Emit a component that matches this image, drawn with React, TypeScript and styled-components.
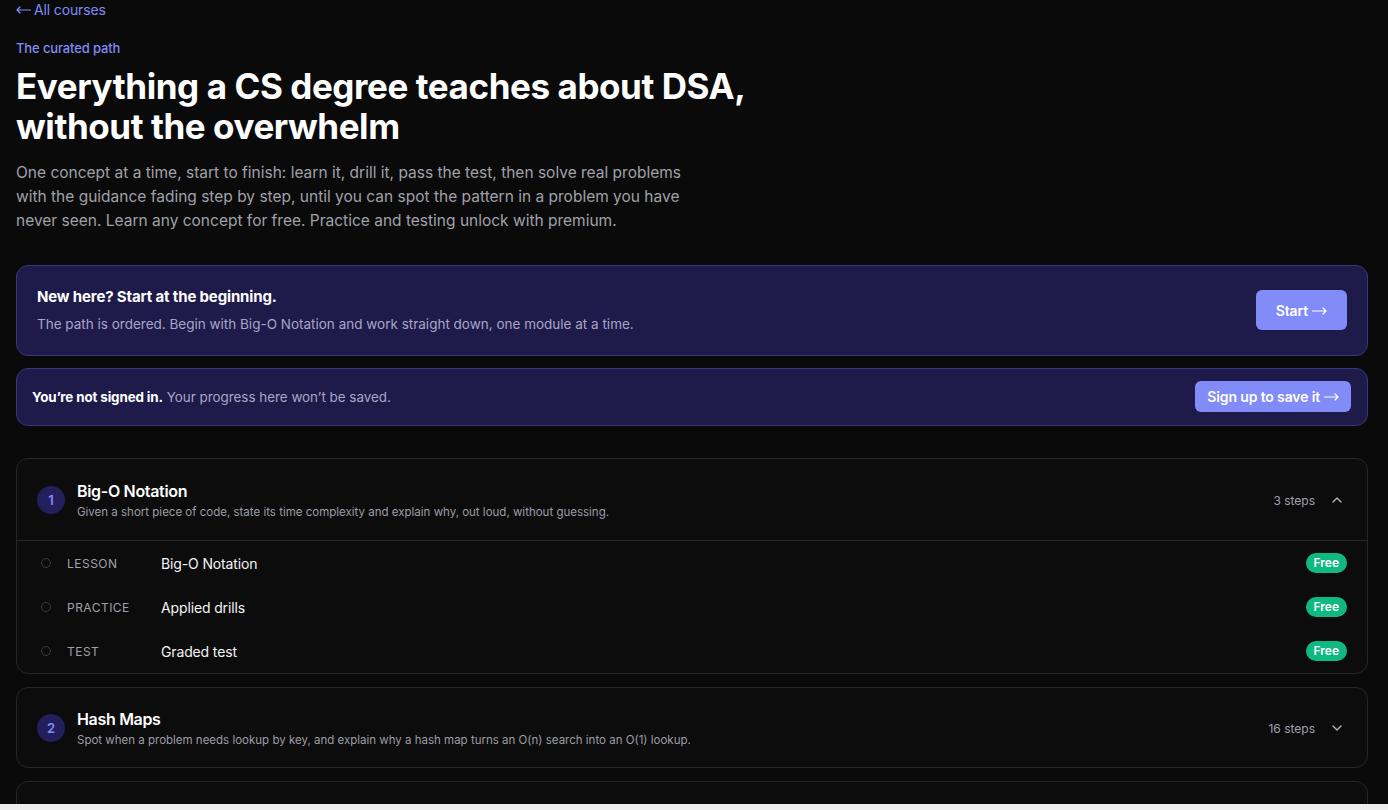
import React from "react";
import styled, { createGlobalStyle } from "styled-components";
import { ChevronDown, ChevronUp } from "lucide-react";

const GlobalStyle = createGlobalStyle`
  html, body {
    margin: 0;
    padding: 0;
    background: #0a0a0a;
    color: #fafafa;
    font-family: Inter, "Noto Sans", sans-serif;
    -webkit-font-smoothing: antialiased;
  }
  * {
    box-sizing: border-box;
  }
`;

const Page = styled.main`
  padding: 0 20px 40px 16px;
  min-height: 100vh;
`;

const ArrowSvg = styled.svg<{ flip?: boolean }>`
  width: 15px;
  height: 8px;
  vertical-align: middle;
  transform: ${(p) => (p.flip ? "scaleX(-1)" : "none")};
`;

// thin, long arrow used in links and buttons
const Arrow = ({ back }: { back?: boolean }) => (
  <ArrowSvg flip={back} viewBox="0 0 15 8" fill="none">
    <path
      d="M0.5 4H14M11 1L14 4L11 7"
      stroke="currentColor"
      strokeWidth="1.2"
      strokeLinecap="round"
      strokeLinejoin="round"
    />
  </ArrowSvg>
);

const BackLink = styled.a`
  display: flex;
  align-items: center;
  gap: 3px;
  font-size: 14px;
  line-height: 20px;
  color: #818cf8;
  text-decoration: none;
  letter-spacing: -0.01em;
`;

const Eyebrow = styled.div`
  margin-top: 18px;
  font-size: 13px;
  line-height: 20px;
  font-weight: 500;
  color: #818cf8;
  letter-spacing: -0.01em;
`;

const Heading = styled.h1`
  margin: 8px 0 0;
  max-width: 768px;
  font-size: 35px;
  line-height: 40px;
  font-weight: 700;
  letter-spacing: -0.012em;
  color: #ffffff;
`;

const Lead = styled.p`
  margin: 15px 0 0;
  max-width: 680px;
  font-size: 15.5px;
  line-height: 24px;
  color: #a1a1aa;
`;

const Banner = styled.section<{ compact?: boolean }>`
  display: flex;
  align-items: center;
  justify-content: space-between;
  gap: 24px;
  background: #1e1b4b;
  border: 1px solid #3a367a;
  border-radius: 12px;
  padding: ${(p) => (p.compact ? "12px 16px 13px 15px" : "20px 20px 21px")};
  margin-top: ${(p) => (p.compact ? "12px" : "32px")};
`;

const BannerTitle = styled.div`
  font-size: 15px;
  line-height: 22px;
  font-weight: 700;
  letter-spacing: -0.01em;
  color: #ffffff;
`;

const BannerText = styled.div`
  margin-top: 6px;
  font-size: 13.5px;
  line-height: 20px;
  color: #a8a6c4;
`;

const Notice = styled.div`
  font-size: 13.4px;
  line-height: 20px;
  color: #a8a6c4;

  strong {
    color: #ffffff;
    font-weight: 700;
    letter-spacing: -0.01em;
  }
`;

const CtaButton = styled.button<{ size?: "lg" | "sm" }>`
  flex-shrink: 0;
  display: inline-flex;
  align-items: center;
  gap: 4px;
  border: none;
  border-radius: 6px;
  background: #818cf8;
  color: #ffffff;
  font-family: inherit;
  font-size: 14px;
  font-weight: 600;
  letter-spacing: -0.01em;
  cursor: pointer;
  height: ${(p) => (p.size === "sm" ? "31px" : "40px")};
  padding: ${(p) => (p.size === "sm" ? "0 12px" : "0 20px")};

  svg {
    margin-top: 1px;
  }
`;

const Modules = styled.div`
  margin-top: 32px;
  display: flex;
  flex-direction: column;
  gap: 13px;
`;

const ModuleCard = styled.section`
  border: 1px solid #26262a;
  border-radius: 12px;
  background: #0c0c0d;
  overflow: hidden;
`;

const ModuleHeader = styled.div<{ open?: boolean }>`
  display: flex;
  align-items: center;
  gap: 12px;
  padding: ${(p) => (p.open ? "20px 20px 19px" : "19px 20px 18px")};
  border-bottom: ${(p) => (p.open ? "1px solid #26262a" : "none")};
`;

const NumberBadge = styled.div`
  width: 28px;
  height: 28px;
  flex-shrink: 0;
  border-radius: 50%;
  background: #231f5c;
  color: #818cf8;
  display: grid;
  place-items: center;
  font-size: 13px;
  font-weight: 600;
`;

const ModuleInfo = styled.div`
  flex: 1;
  min-width: 0;
`;

const ModuleTitle = styled.div`
  font-size: 16px;
  line-height: 24px;
  font-weight: 600;
  letter-spacing: -0.02em;
  color: #ffffff;
`;

const ModuleDesc = styled.div`
  font-size: 11.5px;
  line-height: 18px;
  color: #9d9da6;
`;

const StepCount = styled.div`
  display: flex;
  align-items: center;
  gap: 14px;
  font-size: 12px;
  color: #a1a1aa;
  padding-right: 2px;
`;

const StepList = styled.ul`
  list-style: none;
  margin: 0;
  padding: 0;
`;

const StepRow = styled.li`
  display: grid;
  grid-template-columns: 10px 78px 1fr auto;
  align-items: center;
  column-gap: 16px;
  height: 44px;
  padding: 0 20px 0 24px;
`;

const StepDot = styled.span`
  width: 10px;
  height: 10px;
  border-radius: 50%;
  border: 1.5px solid #3a3a40;
`;

const StepKind = styled.span`
  font-size: 12px;
  letter-spacing: 0.04em;
  text-transform: uppercase;
  color: #a1a1aa;
`;

const StepTitle = styled.span`
  font-size: 14px;
  color: #f4f4f5;
  letter-spacing: -0.01em;
`;

const FreeTag = styled.span`
  background: #10b981;
  color: #ffffff;
  font-size: 12px;
  font-weight: 600;
  line-height: 20px;
  padding: 0 8px;
  border-radius: 999px;
`;

const BottomEdge = styled.div`
  position: fixed;
  left: 0;
  right: 0;
  bottom: 0;
  height: 6px;
  background: #efefef;
`;

type Step = { kind: string; title: string };

type Module = {
  title: string;
  desc: string;
  steps: number;
  open?: boolean;
  items?: Step[];
};

const modules: Module[] = [
  {
    title: "Big-O Notation",
    desc: "Given a short piece of code, state its time complexity and explain why, out loud, without guessing.",
    steps: 3,
    open: true,
    items: [
      { kind: "Lesson", title: "Big-O Notation" },
      { kind: "Practice", title: "Applied drills" },
      { kind: "Test", title: "Graded test" },
    ],
  },
  {
    title: "Hash Maps",
    desc: "Spot when a problem needs lookup by key, and explain why a hash map turns an O(n) search into an O(1) lookup.",
    steps: 16,
  },
  {
    title: "Two Pointers",
    desc: "Recognise sorted-input problems where two indices moving toward each other replace a nested loop.",
    steps: 12,
  },
];

export default function App() {
  return (
    <>
      <GlobalStyle />
      <Page>
        <BackLink href="#">
          <Arrow back />
          All courses
        </BackLink>
        <Eyebrow>The curated path</Eyebrow>
        <Heading>
          Everything a CS degree teaches about DSA, without the overwhelm
        </Heading>
        <Lead>
          One concept at a time, start to finish: learn it, drill it, pass the
          test, then solve real problems with the guidance fading step by step,
          until you can spot the pattern in a problem you have never seen. Learn
          any concept for free. Practice and testing unlock with premium.
        </Lead>

        <Banner>
          <div>
            <BannerTitle>New here? Start at the beginning.</BannerTitle>
            <BannerText>
              The path is ordered. Begin with Big-O Notation and work straight
              down, one module at a time.
            </BannerText>
          </div>
          <CtaButton>
            Start
            <Arrow />
          </CtaButton>
        </Banner>

        <Banner compact>
          <Notice>
            <strong>You’re not signed in.</strong> Your progress here won’t be
            saved.
          </Notice>
          <CtaButton size="sm">
            Sign up to save it
            <Arrow />
          </CtaButton>
        </Banner>

        <Modules>
          {modules.map((m, i) => (
            <ModuleCard key={m.title}>
              <ModuleHeader open={m.open}>
                <NumberBadge>{i + 1}</NumberBadge>
                <ModuleInfo>
                  <ModuleTitle>{m.title}</ModuleTitle>
                  <ModuleDesc>{m.desc}</ModuleDesc>
                </ModuleInfo>
                <StepCount>
                  {m.steps} steps
                  {m.open ? (
                    <ChevronUp size={16} color="#b4b4bb" />
                  ) : (
                    <ChevronDown size={16} color="#b4b4bb" />
                  )}
                </StepCount>
              </ModuleHeader>
              {m.open && m.items && (
                <StepList>
                  {m.items.map((s) => (
                    <StepRow key={s.kind}>
                      <StepDot />
                      <StepKind>{s.kind}</StepKind>
                      <StepTitle>{s.title}</StepTitle>
                      <FreeTag>Free</FreeTag>
                    </StepRow>
                  ))}
                </StepList>
              )}
            </ModuleCard>
          ))}
        </Modules>
      </Page>
      <BottomEdge />
    </>
  );
}
